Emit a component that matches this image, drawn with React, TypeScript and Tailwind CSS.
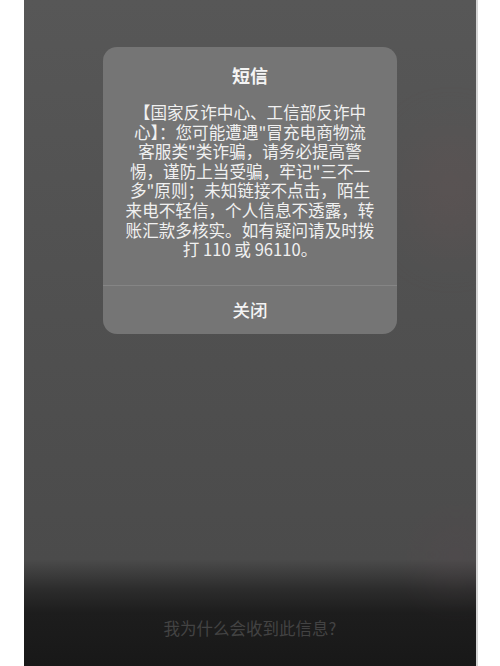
import React from "react";

const lines = [
  "【国家反诈中心、工信部反诈中",
  "心】：您可能遭遇\"冒充电商物流",
  "客服类\"类诈骗，请务必提高警",
  "惕，谨防上当受骗，牢记\"三不一",
  "多\"原则；未知链接不点击，陌生",
  "来电不轻信，个人信息不透露，转",
  "账汇款多核实。如有疑问请及时拨",
  "打 110 或 96110。",
];

export default function App() {
  return (
    <div
      className="w-[500px] h-[666px] bg-white flex pl-[24px] pr-[22px] overflow-hidden"
      style={{ fontFamily: '"Noto Sans CJK SC", "Noto Sans", sans-serif' }}
    >
      <div className="relative flex-1 flex flex-col items-center overflow-hidden border-r-2 border-[#d4d4d4] bg-[linear-gradient(to_bottom,#575757_0%,#515151_40%,#4b4b4b_84%,#2c2c2c_88.5%,#1d1d1d_92%,#181818_100%)]">
        <div className="absolute right-[-10px] top-[130px] w-[70px] h-[120px] rounded-full bg-[#6a5555] opacity-30 blur-xl" />
        <div className="absolute right-[-10px] top-[520px] w-[60px] h-[70px] rounded-full bg-[#5a4a50] opacity-30 blur-xl" />
        <div className="relative mt-[47px] w-[294px] rounded-[14px] bg-[#757575] flex flex-col">
          <div className="pt-[17px] text-center text-[18px] leading-[22px] font-bold text-[#f4f4f4]">
            短信
          </div>
          <div className="mt-[17px] pb-[25px] px-[8px] text-center text-[16.6px] leading-[19.6px] text-[#f0f0f0]">
            {lines.map((l, i) => (
              <div key={i} className="whitespace-nowrap">
                {l}
              </div>
            ))}
          </div>
          <div className="h-px bg-[#858585]" />
          <div className="h-[48px] flex items-center justify-center text-[17.5px] font-medium text-[#f4f4f4]">
            关闭
          </div>
        </div>
        <div className="mt-auto pb-[27px] text-[16.5px] leading-[22px] text-[#434343]">
          我为什么会收到此信息?
        </div>
      </div>
    </div>
  );
}
